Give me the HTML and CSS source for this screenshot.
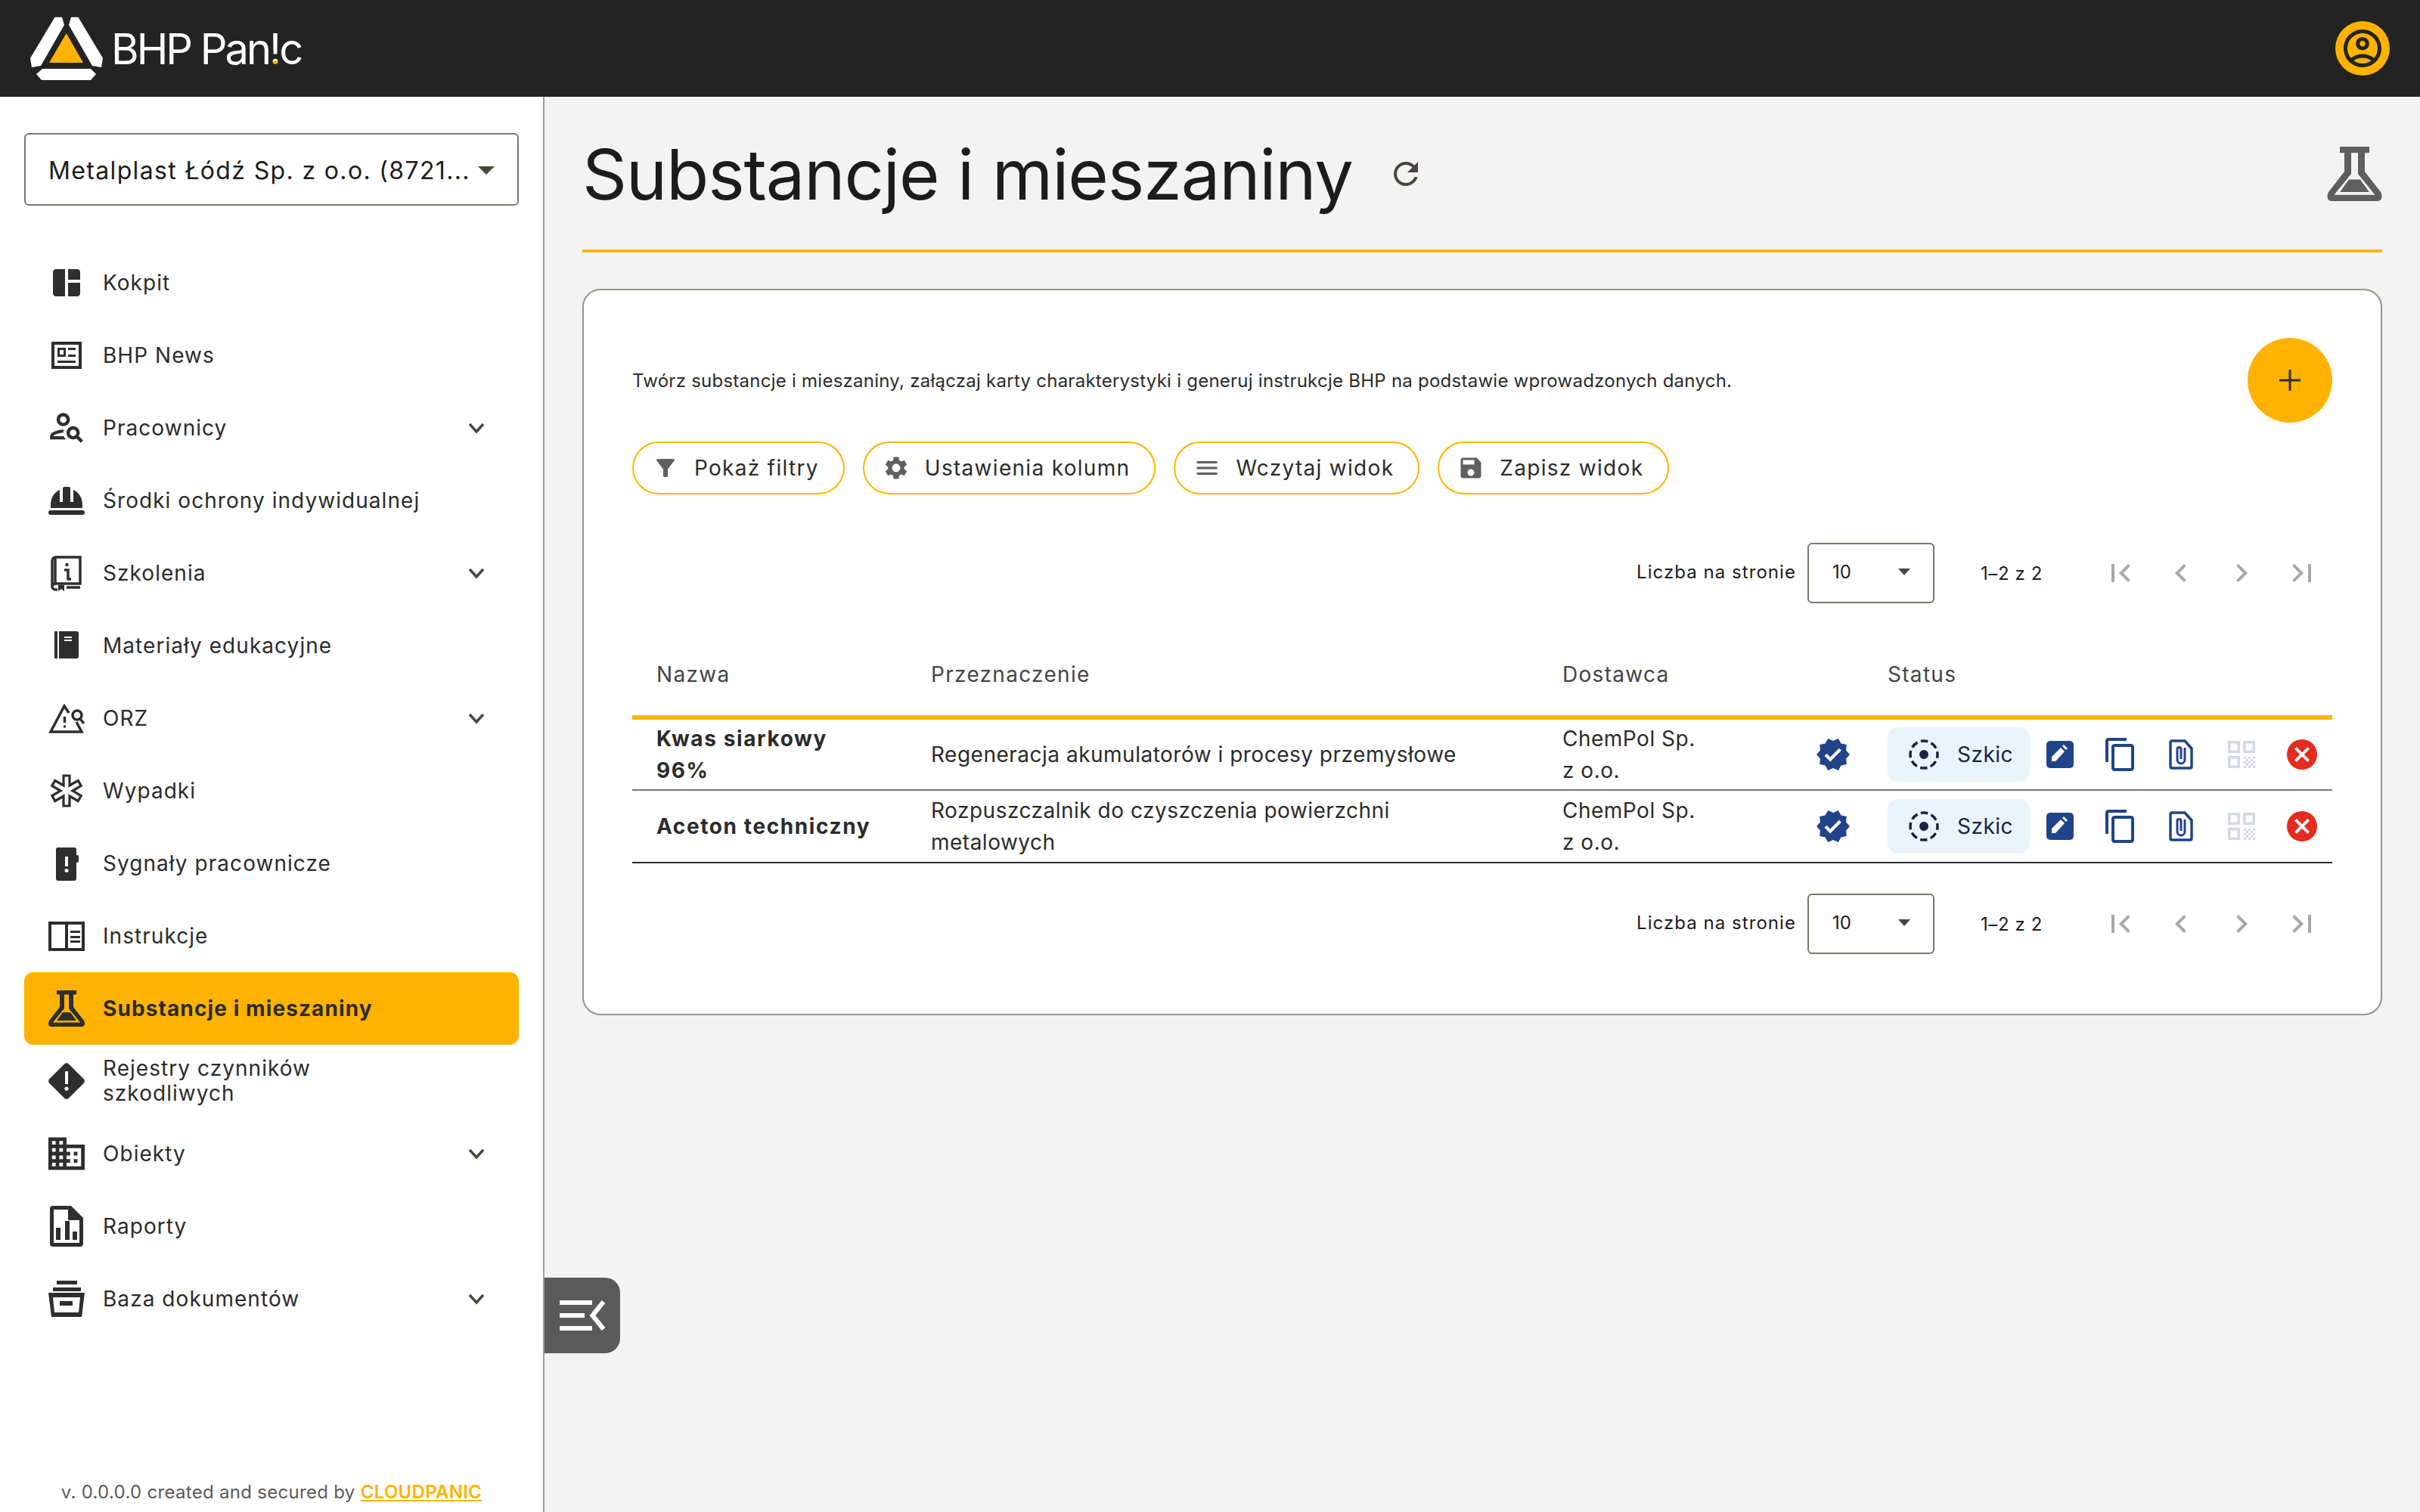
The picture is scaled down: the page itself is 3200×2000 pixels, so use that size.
FILE: index.html
```html
<!DOCTYPE html>
<html lang="pl">
<head>
  <meta charset="UTF-8">
  <title>BHP Panic - Substancje i mieszaniny</title>
  <link rel="stylesheet" href="styles.css">
</head>
<body>
  <header class="topbar">
    <div class="brand">
      <svg class="brand-mark" viewBox="40 22 96 84">
        <path fill="#fff" d="M82 22.7 72.5 22.7 40 77 42 89 54 87 85 33z"/>
        <path fill="#fff" d="M94 22.7 103.500 22.700 136 77 134 89 122 87 91 33z"/>
        <path fill="#fff" d="M56 91H120L127 98 120 106H55L48 98z"/>
        <path fill="#ffb300" d="M87.700 44 110 83H65z"/>
      </svg>
      <span class="brand-name">BHP Pan<span class="brand-bang">!</span>c</span>
    </div>
    <span class="avatar">
      <svg viewBox="0 0 24 24"><path d="M12 2C6.480 2 2 6.480 2 12s4.480 10 10 10 10-4.480 10-10S17.520 2 12 2zM7.350 18.500C8.660 17.560 10.260 17 12 17s3.340.56 4.650 1.500c-1.310.94-2.910 1.500-4.650 1.500s-3.340-.56-4.650-1.500zm10.790-1.380C16.450 15.800 14.320 15 12 15s-4.450.8-6.140 2.120C4.700 15.730 4 13.950 4 12c0-4.420 3.580-8 8-8s8 3.580 8 8c0 1.950-.7 3.730-1.860 5.120zM12 6c-1.930 0-3.500 1.570-3.500 3.500S10.070 13 12 13s3.500-1.570 3.500-3.500S13.930 6 12 6zm0 5c-.83 0-1.500-.67-1.500-1.500S11.170 8 12 8s1.500.67 1.500 1.500S12.830 11 12 11z"/></svg>
    </span>
  </header>

  <div class="layout">
    <aside class="sidebar">
      <div class="company-select">
        <span>Metalplast Łódź Sp. z o.o. (8721...</span>
        <i class="caret"></i>
      </div>

      <nav class="nav">
        <a class="nav-item">
          <svg class="nav-icon" viewBox="0 0 24 24"><path d="M11 21H5c-1.100 0-2-.9-2-2V5c0-1.100.9-2 2-2h6v18zm2 0h6c1.100 0 2-.9 2-2v-7h-8v9zm8-11V5c0-1.100-.9-2-2-2h-6v7h8z"/></svg>
          <span>Kokpit</span>
        </a>
        <a class="nav-item">
          <svg class="nav-icon" viewBox="0 0 48 48"><path fill-rule="evenodd" d="M4 6H44V42H4zM8 10V38H40V10z"/><path fill-rule="evenodd" d="M12 14H23V26H12zM15 17V23H20V17z"/><path d="M26 14H36V17H26zM26 23H36V26H26zM12 31H36V34H12z"/></svg>
          <span>BHP News</span>
        </a>
        <a class="nav-item">
          <svg class="nav-icon" viewBox="1 2 22 22"><path d="M10 12c2.210 0 4-1.790 4-4s-1.790-4-4-4-4 1.790-4 4 1.790 4 4 4zm0-6c1.100 0 2 .9 2 2s-.9 2-2 2-2-.9-2-2 .9-2 2-2zM4 18c.22-.72 3.310-2 6-2 0-.7.13-1.370.35-1.990C7.620 13.910 2 15.270 2 18v2h9.540c-.52-.58-.93-1.250-1.190-2H4zm15.300-.02c.36-.59.7-1.280.7-1.980 0-2.210-1.790-4-4-4s-4 1.790-4 4 1.790 4 4 4c.73 0 1.410-.22 2-.57L20.590 22 22 20.590c-1.500-1.500-2.200-2.200-2.700-2.610zM16 18c-1.100 0-2-.9-2-2s.9-2 2-2 2 .9 2 2-.9 2-2 2z"/></svg>
          <span>Pracownicy</span>
          <svg class="chevron" viewBox="0 0 24 24"><path d="M3 7l9 10 9-10"/></svg>
        </a>
        <a class="nav-item">
          <svg class="nav-icon" viewBox="0 0 48 48"><path d="M3 34v-4C3 20 8 13 15 10v16h4V8l1-2h8l1 2v18h4V10c7 3 12 10 12 20v4z"/><rect x="0" y="37" width="48" height="6" rx="3"/></svg>
          <span>Środki ochrony indywidualnej</span>
        </a>
        <a class="nav-item">
          <svg class="nav-icon line" viewBox="0 0 48 48"><path d="M5 42V8c0-3 2-5 5-5h32v35H10c-3 0-5 2-5 4s2 4 5 4h2M24 43h18M9 38V4"/><path d="M21 20h5v12h4"/><circle class="solid" cx="24.500" cy="13" r="2.200"/><path class="solid" d="M13 40h8v8l-4-3-4 3z"/></svg>
          <span>Szkolenia</span>
          <svg class="chevron" viewBox="0 0 24 24"><path d="M3 7l9 10 9-10"/></svg>
        </a>
        <a class="nav-item">
          <svg class="nav-icon" viewBox="0 0 48 48"><path d="M8 5H12V41H8z"/><path fill-rule="evenodd" d="M14 5H37a3 3 0 0 1 3 3V38a3 3 0 0 1-3 3H14zM21 12V14H31V12zM21 16V18H31V16z"/></svg>
          <span>Materiały edukacyjne</span>
        </a>
        <a class="nav-item">
          <svg class="nav-icon line" viewBox="0 0 48 48"><path d="M27 17 21 8 3 42H44L37 29"/><path d="M21.500 22V30"/><circle cx="38" cy="20" r="6"/><path d="M42 25 47 31"/><circle class="solid" cx="21.500" cy="35" r="1.800"/></svg>
          <span>ORZ</span>
          <svg class="chevron" viewBox="0 0 24 24"><path d="M3 7l9 10 9-10"/></svg>
        </a>
        <a class="nav-item">
          <svg class="nav-icon line thin" viewBox="0 0 24 24"><path d="M10 2h4v6.500l5.600-3.250 2 3.460L16 12l5.600 3.290-2 3.460L14 15.500V22h-4v-6.500l-5.600 3.250-2-3.460L8 12 2.400 8.710l2-3.460L10 8.500z"/></svg>
          <span>Wypadki</span>
        </a>
        <a class="nav-item">
          <svg class="nav-icon" viewBox="0 0 48 48"><path fill-rule="evenodd" d="M13 3H34a3 3 0 0 1 3 3V44a3 3 0 0 1-3 3H13a3 3 0 0 1-3-3V6a3 3 0 0 1 3-3zM22 15V28H26V15zM24 31a2.500 2.500 0 1 0 0 5 2.500 2.500 0 0 0 0-5z"/><rect x="36" y="13" width="4" height="10" rx="2"/></svg>
          <span>Sygnały pracownicze</span>
        </a>
        <a class="nav-item">
          <svg class="nav-icon" viewBox="0 0 48 48"><path fill-rule="evenodd" d="M0 5H48V44H0zM4 9V40H22V9zM26 9V40H44V9z"/><path d="M29 17H42V20H29zM29 24H42V27H29zM29 30H42V33H29z"/></svg>
          <span>Instrukcje</span>
        </a>
        <a class="nav-item active">
          <svg class="nav-icon" viewBox="0 0 48 48"><use href="#flask"/></svg>
          <span>Substancje i mieszaniny</span>
        </a>
        <a class="nav-item two-lines">
          <svg class="nav-icon" viewBox="0 0 48 48"><path fill-rule="evenodd" d="M21 1.500a4 4 0 0 1 6 0L46.500 21a4 4 0 0 1 0 6L27 46.500a4 4 0 0 1-6 0L1.500 27a4 4 0 0 1 0-6zM22 11V28H26V11zM24 31.500a2.600 2.600 0 1 0 0 5.200 2.600 2.600 0 0 0 0-5.200z"/></svg>
          <span>Rejestry czynników szkodliwych</span>
        </a>
        <a class="nav-item">
          <svg class="nav-icon" viewBox="2 3 20 18"><path d="M12 7V3H2v18h20V7H12zM6 19H4v-2h2v2zm0-4H4v-2h2v2zm0-4H4V9h2v2zm0-4H4V5h2v2zm4 12H8v-2h2v2zm0-4H8v-2h2v2zm0-4H8V9h2v2zm0-4H8V5h2v2zm10 12h-8v-2h2v-2h-2v-2h2v-2h-2V9h8v10zm-2-8h-2v2h2v-2zm0 4h-2v2h2v-2z"/></svg>
          <span>Obiekty</span>
          <svg class="chevron" viewBox="0 0 24 24"><path d="M3 7l9 10 9-10"/></svg>
        </a>
        <a class="nav-item">
          <svg class="nav-icon" viewBox="0 0 48 48"><path fill-rule="evenodd" d="M6-3H30L46 13V47a4 4 0 0 1-4 4H6a4 4 0 0 1-4-4V1a4 4 0 0 1 4-4zM7 2V46H41V16H26V2z"/><path d="M10 26H16V42H10zM22 17H28V42H22zM32 31H38V42H32z"/></svg>
          <span>Raporty</span>
        </a>
        <a class="nav-item">
          <svg class="nav-icon" viewBox="0 0 48 48"><path d="M11 0H38V5H11zM6 9H43V14H6z"/><path fill-rule="evenodd" d="M0 16H48L44 48H4zM6 22 8 42H40L42 22z"/><path d="M15 27H32V33H15z"/></svg>
          <span>Baza dokumentów</span>
          <svg class="chevron" viewBox="0 0 24 24"><path d="M3 7l9 10 9-10"/></svg>
        </a>
      </nav>

      <p class="version">v. 0.0.0.0 created and secured by <a>CLOUDPANIC</a></p>
    </aside>

    <main class="content">
      <button class="drawer-toggle">
        <svg viewBox="0 0 60 40"><path d="M0 0H43V6H0zM0 17H33V23H0zM0 34H43V40H0z"/><path d="M58 2 43.500 20 58 38" fill="none" stroke="#fff" stroke-width="6"/></svg>
      </button>

      <div class="page-head">
        <h1>Substancje i mieszaniny</h1>
        <svg class="reload" viewBox="0 0 24 24"><path d="M17.650 6.350C16.200 4.900 14.210 4 12 4c-4.420 0-7.990 3.580-7.990 8s3.570 8 7.990 8c3.730 0 6.840-2.550 7.730-6h-2.080c-.82 2.330-3.040 4-5.650 4-3.310 0-6-2.690-6-6s2.690-6 6-6c1.660 0 3.140.69 4.220 1.780L13 11h7V4l-2.350 2.350z"/></svg>
        <svg class="head-flask" viewBox="0 0 48 48">
          <defs>
            <g id="flask">
              <path fill-rule="evenodd" d="M11 0H37V5.500H33V22L47 40C49 44 48 48 44 48H4C0 48-1 44 1 40L15 22V5.500H11zM21 5.500V24L6 42.500H42L27 24V5.500z"/>
              <path d="M19 29H29L37 40H11z"/>
            </g>
          </defs>
          <use href="#flask"/>
        </svg>
      </div>

      <section class="card">
        <div class="intro">
          <p>Twórz substancje i mieszaniny, załączaj karty charakterystyki i generuj instrukcje BHP na podstawie wprowadzonych danych.</p>
          <button class="fab">
            <svg viewBox="0 0 28 28"><path d="M12.500 0H15.500V12.500H28V15.500H15.500V28H12.500V15.500H0V12.500H12.500z"/></svg>
          </button>
        </div>

        <div class="pills">
          <button class="pill">
            <svg viewBox="0 0 24 24"><path d="M4.250 5.610C6.270 8.200 10 13 10 13v6c0 .55.45 1 1 1h2c.55 0 1-.45 1-1v-6s3.720-4.800 5.740-7.390c.51-.66.04-1.610-.79-1.610H5.040c-.83 0-1.300.95-.79 1.610z"/></svg>
            Pokaż filtry
          </button>
          <button class="pill">
            <svg viewBox="0 0 24 24"><path d="M19.140 12.940c.04-.3.06-.61.06-.94 0-.32-.02-.64-.07-.94l2.030-1.580c.18-.14.23-.41.12-.61l-1.920-3.320c-.12-.22-.37-.29-.59-.22l-2.390.96c-.5-.38-1.030-.7-1.620-.94l-.36-2.540c-.04-.24-.24-.41-.48-.41h-3.840c-.24 0-.43.17-.47.41l-.36 2.540c-.59.24-1.130.57-1.620.94l-2.390-.96c-.22-.08-.47 0-.59.22L2.740 8.870c-.12.21-.08.47.12.61l2.030 1.580c-.05.3-.09.63-.09.94s.02.64.07.94l-2.030 1.580c-.18.14-.23.41-.12.61l1.920 3.320c.12.22.37.29.59.22l2.390-.96c.5.38 1.030.7 1.620.94l.36 2.540c.05.24.24.41.48.41h3.840c.24 0 .44-.17.47-.41l.36-2.540c.59-.24 1.130-.56 1.620-.94l2.390.96c.22.08.47 0 .59-.22l1.920-3.320c.12-.22.07-.47-.12-.61l-2.010-1.580zM12 15.600c-1.980 0-3.600-1.620-3.600-3.600s1.620-3.600 3.600-3.600 3.600 1.620 3.600 3.600-1.620 3.600-3.600 3.600z"/></svg>
            Ustawienia kolumn
          </button>
          <button class="pill">
            <svg viewBox="0 0 24 24"><path d="M3 18h18v-2H3v2zm0-5h18v-2H3v2zm0-7v2h18V6H3z"/></svg>
            Wczytaj widok
          </button>
          <button class="pill">
            <svg viewBox="0 0 24 24"><path d="M17 3H5c-1.110 0-2 .9-2 2v14c0 1.100.89 2 2 2h14c1.100 0 2-.9 2-2V7l-4-4zm-5 16c-1.660 0-3-1.340-3-3s1.340-3 3-3 3 1.340 3 3-1.340 3-3 3zm3-10H5V5h10v4z"/></svg>
            Zapisz widok
          </button>
        </div>

        <div class="pager">
          <span class="pager-label">Liczba na stronie</span>
          <div class="pager-select"><span>10</span><i class="caret small"></i></div>
          <span class="pager-range">1–2 z 2</span>
          <div class="pager-nav">
            <svg viewBox="0 0 24 24"><path d="M18.410 16.590 13.820 12l4.590-4.590L17 6l-6 6 6 6zM6 6h2v12H6z"/></svg>
            <svg viewBox="0 0 24 24"><path d="M15.410 7.410 14 6l-6 6 6 6 1.410-1.410L10.830 12z"/></svg>
            <svg viewBox="0 0 24 24"><path d="M10 6 8.590 7.410 13.170 12l-4.580 4.590L10 18l6-6z"/></svg>
            <svg viewBox="0 0 24 24"><path d="M5.590 7.410 10.180 12l-4.590 4.590L7 18l6-6-6-6zM16 6h2v12h-2z"/></svg>
          </div>
        </div>

        <table class="grid">
          <colgroup>
            <col class="col-name"><col class="col-use"><col class="col-supplier"><col class="col-badge"><col class="col-status">
          </colgroup>
          <thead>
            <tr><th>Nazwa</th><th>Przeznaczenie</th><th>Dostawca</th><th></th><th class="status-head">Status</th></tr>
          </thead>
          <tbody>
            <tr>
              <td class="name">Kwas siarkowy 96%</td>
              <td class="use">Regeneracja akumulatorów i procesy przemysłowe</td>
              <td class="supplier">ChemPol Sp. z o.o.</td>
              <td class="badge-cell"><svg viewBox="0 0 24 24"><use href="#verified"/></svg></td>
              <td class="actions">
                <div class="row-actions">
                  <span class="chip">
                    <svg viewBox="0 0 40 40"><use href="#draft"/></svg>
                    Szkic
                  </span>
                  <svg viewBox="0 0 48 48"><use href="#edit"/></svg>
                  <svg viewBox="0 0 24 24"><use href="#copy"/></svg>
                  <svg viewBox="0 0 48 48"><use href="#attach"/></svg>
                  <svg viewBox="0 0 48 48"><use href="#qr"/></svg>
                  <svg viewBox="0 0 24 24"><use href="#remove"/></svg>
                </div>
              </td>
            </tr>
            <tr>
              <td class="name">Aceton techniczny</td>
              <td class="use">Rozpuszczalnik do czyszczenia powierzchni metalowych</td>
              <td class="supplier">ChemPol Sp. z o.o.</td>
              <td class="badge-cell"><svg viewBox="0 0 24 24"><use href="#verified"/></svg></td>
              <td class="actions">
                <div class="row-actions">
                  <span class="chip">
                    <svg viewBox="0 0 40 40"><use href="#draft"/></svg>
                    Szkic
                  </span>
                  <svg viewBox="0 0 48 48"><use href="#edit"/></svg>
                  <svg viewBox="0 0 24 24"><use href="#copy"/></svg>
                  <svg viewBox="0 0 48 48"><use href="#attach"/></svg>
                  <svg viewBox="0 0 48 48"><use href="#qr"/></svg>
                  <svg viewBox="0 0 24 24"><use href="#remove"/></svg>
                </div>
              </td>
            </tr>
          </tbody>
        </table>

        <div class="pager pager-bottom">
          <span class="pager-label">Liczba na stronie</span>
          <div class="pager-select"><span>10</span><i class="caret small"></i></div>
          <span class="pager-range">1–2 z 2</span>
          <div class="pager-nav">
            <svg viewBox="0 0 24 24"><path d="M18.410 16.590 13.820 12l4.590-4.590L17 6l-6 6 6 6zM6 6h2v12H6z"/></svg>
            <svg viewBox="0 0 24 24"><path d="M15.410 7.410 14 6l-6 6 6 6 1.410-1.410L10.830 12z"/></svg>
            <svg viewBox="0 0 24 24"><path d="M10 6 8.590 7.410 13.170 12l-4.580 4.590L10 18l6-6z"/></svg>
            <svg viewBox="0 0 24 24"><path d="M5.590 7.410 10.180 12l-4.590 4.590L7 18l6-6-6-6zM16 6h2v12h-2z"/></svg>
          </div>
        </div>
      </section>
    </main>
  </div>

  <svg class="icon-defs" width="0" height="0">
    <defs>
      <pattern id="qr-dots" width="6" height="6" patternUnits="userSpaceOnUse">
        <rect width="3" height="3" fill="#d0d9e8"/>
        <rect x="3" y="3" width="3" height="3" fill="#d0d9e8"/>
      </pattern>
      <path id="verified" fill="#21438a" d="M23 12l-2.440-2.790.34-3.690-3.610-.82-1.890-3.200L12 2.960 8.600 1.500 6.710 4.690 3.100 5.500l.34 3.700L1 12l2.440 2.790-.34 3.700 3.610.82L8.600 22.500l3.400-1.470 3.400 1.460 1.890-3.190 3.610-.82-.34-3.690L23 12zm-12.910 4.720l-3.800-3.810 1.480-1.480 2.320 2.330 5.850-5.870 1.480 1.480-7.330 7.350z"/>
      <g id="draft">
        <circle cx="20" cy="20" r="18" fill="none" stroke="#1a2440" stroke-width="3.500" stroke-dasharray="9.500 4.640" stroke-dashoffset="4.700"/>
        <circle cx="20" cy="20" r="6" fill="#1a2440"/>
      </g>
      <g id="edit">
        <rect x="6" y="6" width="36" height="36" rx="5" fill="#21438a"/>
        <path fill="#fff" d="M13 33V27L25 15 30 20 18 33z"/>
        <path fill="#fff" d="M27 13 29 11 34 16 32 18z"/>
      </g>
      <path id="copy" fill="#21438a" d="M16 1H4c-1.100 0-2 .9-2 2v14h2V3h12V1zm3 4H8c-1.100 0-2 .9-2 2v14c0 1.100.9 2 2 2h11c1.100 0 2-.9 2-2V7c0-1.100-.9-2-2-2zm0 16H8V7h11v14z"/>
      <g id="attach" fill="none" stroke="#21438a">
        <path stroke-width="3.500" d="M11 6H29L38 16V40A2 2 0 0 1 36 42H12A2 2 0 0 1 10 40V8A2 2 0 0 1 12 6z"/>
        <path stroke-width="3" d="M29 15V31A5 5 0 0 1 19 31V17A2.500 2.500 0 0 1 24 17V30"/>
      </g>
      <g id="qr">
        <g fill="none" stroke="#d0d9e8" stroke-width="3.500">
          <rect x="7.750" y="7.750" width="12.500" height="12.500"/>
          <rect x="27.750" y="7.750" width="12.500" height="12.500"/>
          <rect x="7.750" y="27.750" width="12.500" height="12.500"/>
        </g>
        <rect x="27" y="27" width="15" height="15" fill="url(#qr-dots)"/>
      </g>
      <g id="remove">
        <circle cx="12" cy="12" r="10" fill="#e52b1f"/>
        <path fill="#fff" d="M17 15.590 15.590 17 12 13.410 8.410 17 7 15.590 10.590 12 7 8.410 8.410 7 12 10.590 15.590 7 17 8.410 13.410 12z"/>
      </g>
    </defs>
  </svg>
</body>
</html>
```

FILE: styles.css
```css
* {
  box-sizing: border-box;
}

html, body {
  height: 100%;
}

body {
  margin: 0;
  display: flex;
  flex-direction: column;
  overflow: hidden;
  font-family: Inter, "Noto Sans", sans-serif;
  font-size: 28px;
  color: #2b2b2b;
  background: #f3f3f3;
}

/* top bar */
.topbar {
  flex: 0 0 128px;
  display: flex;
  align-items: center;
  justify-content: space-between;
  padding: 0 40px;
  background: #232323;
}

.brand {
  display: flex;
  align-items: center;
  gap: 11px;
}

.brand-mark {
  width: 96px;
  height: 84px;
}

.brand-name {
  padding-top: 2px;
  font-size: 56px;
  font-weight: 400;
  letter-spacing: -3px;
  color: #fff;
}

.brand-bang {
  background: linear-gradient(#fff 72%, #ffb300 72%);
  -webkit-background-clip: text;
  background-clip: text;
  color: transparent;
}

.avatar {
  width: 72px;
  height: 72px;
  display: flex;
  align-items: center;
  justify-content: center;
  border-radius: 50%;
  background: #ffb300;
}

.avatar svg {
  width: 60px;
  height: 60px;
  fill: #232323;
}

.layout {
  flex: 1;
  display: flex;
  min-height: 0;
}

/* sidebar */
.sidebar {
  flex: 0 0 720px;
  display: flex;
  flex-direction: column;
  padding: 48px 32px 0;
  border-right: 2px solid #9a9a9a;
  background: #fff;
}

.company-select {
  height: 96px;
  display: flex;
  align-items: center;
  justify-content: space-between;
  padding: 2px 30px 0 30px;
  border: 2px solid #7b766b;
  border-radius: 6px;
  font-size: 32px;
  letter-spacing: 1.35px;
  color: #1c1c1c;
  white-space: nowrap;
}

.caret {
  width: 0;
  height: 0;
  border-left: 11px solid transparent;
  border-right: 11px solid transparent;
  border-top: 11px solid #4a453d;
}

.caret.small {
  border-left-width: 8px;
  border-right-width: 8px;
  border-top-width: 9px;
}

.nav {
  margin-top: 54px;
  display: flex;
  flex-direction: column;
}

.nav-item {
  height: 96px;
  display: flex;
  align-items: center;
  gap: 24px;
  padding: 0 32px;
  border-radius: 12px;
  letter-spacing: 1.05px;
  line-height: 1;
}

.nav-item.active {
  background: #ffb300;
  font-weight: 700;
  letter-spacing: 1.1px;
}

.nav-item.two-lines span {
  line-height: 33px;
  width: 340px;
}

.nav-icon {
  flex: 0 0 48px;
  width: 48px;
  height: 48px;
  fill: #2e2e2e;
  overflow: visible;
}

.nav-icon.line {
  fill: none;
  stroke: #2e2e2e;
  stroke-width: 3.5;
}

.nav-icon.thin {
  stroke-width: 1.6;
}

.nav-icon .solid {
  fill: #2e2e2e;
  stroke: none;
}

.chevron {
  width: 24px;
  height: 24px;
  margin-left: auto;
  margin-right: 12px;
  fill: none;
  stroke: #4a453d;
  stroke-width: 3.5;
}

.version {
  margin: auto -32px 12px;
  text-align: center;
  font-size: 24px;
  letter-spacing: 0.3px;
  color: #5a5a5a;
}

.version a {
  font-weight: 600;
  color: #ffb300;
  text-decoration: underline;
}

/* main column */
.content {
  position: relative;
  flex: 1;
  padding: 0 50px;
}

.drawer-toggle {
  position: absolute;
  left: 0;
  top: 1562px;
  width: 100px;
  height: 100px;
  display: flex;
  align-items: center;
  justify-content: center;
  padding: 0;
  border: 0;
  border-radius: 0 20px 20px 0;
  background: #5a5a5a;
}

.drawer-toggle svg {
  width: 60px;
  height: 40px;
  fill: #fff;
}

.page-head {
  height: 206px;
  display: flex;
  align-items: center;
  padding-top: 2px;
  border-bottom: 4px solid #ffb300;
}

.page-head h1 {
  margin: 0;
  font-size: 92px;
  font-weight: 400;
  letter-spacing: -1.2px;
  color: #1c1c1c;
}

.reload {
  width: 48px;
  height: 48px;
  margin-left: 46px;
  fill: #4a453d;
}

.head-flask {
  width: 73px;
  height: 72px;
  margin-left: auto;
  fill: #5e5e5e;
}

.card {
  margin-top: 48px;
  padding: 63px 64px 79px;
  border: 2px solid #999386;
  border-radius: 24px;
  background: #fff;
}

.intro {
  display: flex;
  align-items: center;
  justify-content: space-between;
  height: 112px;
}

.intro p {
  margin: 0;
  font-size: 24px;
  letter-spacing: 0.25px;
  color: #2b2b2b;
}

.fab {
  width: 112px;
  height: 112px;
  display: flex;
  align-items: center;
  justify-content: center;
  border: 0;
  border-radius: 50%;
  background: #ffb300;
}

.fab svg {
  width: 28px;
  height: 28px;
  fill: #2e2e2e;
}

.pills {
  display: flex;
  gap: 24px;
  margin-top: 25px;
}

.pill {
  height: 70px;
  display: flex;
  align-items: center;
  gap: 20px;
  padding: 0 32px 0 24px;
  border: 2px solid #ffb300;
  border-radius: 35px;
  background: #fff;
  font-family: inherit;
  font-size: 28px;
  letter-spacing: 1.3px;
  color: #2b2b2b;
}

.pill svg {
  width: 36px;
  height: 36px;
  fill: #5f5f5f;
}

/* pagination */
.pager {
  display: flex;
  align-items: center;
  justify-content: flex-end;
  margin-top: 64px;
  padding-right: 16px;
  font-size: 24px;
  color: #1c1c1c;
}

.pager-bottom {
  margin-top: 40px;
}

.pager-label {
  margin-right: 15px;
  padding-bottom: 3px;
  letter-spacing: 1.05px;
}

.pager-select {
  width: 168px;
  height: 80px;
  display: flex;
  align-items: center;
  justify-content: space-between;
  padding: 0 30px 4px 31px;
  border: 2px solid #7b766b;
  border-radius: 6px;
}

.pager-range {
  margin-left: 61px;
  margin-right: 79px;
  letter-spacing: 0.6px;
}

.pager-nav {
  display: flex;
  gap: 32px;
}

.pager-nav svg {
  width: 48px;
  height: 48px;
  fill: #a8a8a8;
}

/* table */
.grid {
  width: 100%;
  margin-top: 40px;
  table-layout: fixed;
  border-collapse: separate;
  border-spacing: 0;
}

.col-name { width: 363px; }
.col-use { width: 835px; }
.col-supplier { width: 336px; }
.col-badge { width: 126px; }
.col-status { width: 588px; }

.grid th {
  height: 114px;
  padding: 0 32px;
  border-bottom: 6px solid #ffb300;
  text-align: left;
  font-weight: 400;
  letter-spacing: 1.3px;
  color: #444;
}

.grid th.status-head {
  padding-left: 0;
}

.grid td {
  height: 94px;
  padding: 0 32px;
  border-bottom: 2px solid #7b766b;
  line-height: 42px;
  letter-spacing: 0.5px;
}

.grid tbody tr:last-child td {
  height: 96px;
  border-bottom-color: #2b2b2b;
}

.grid td.name {
  padding-right: 36px;
  font-weight: 700;
  letter-spacing: 1.6px;
}

.grid td.use {
  padding-right: 64px;
}

.grid td.supplier {
  padding-right: 119px;
}

.grid td.badge-cell {
  padding: 0 18px 0 0;
  text-align: center;
}

.badge-cell svg {
  display: block;
  margin: 0 auto;
  width: 48px;
  height: 48px;
}

.grid td.actions {
  padding: 0;
}

.row-actions {
  display: flex;
  align-items: center;
  gap: 32px;
}

.row-actions > svg {
  flex: 0 0 48px;
  width: 48px;
  height: 48px;
}

.chip {
  flex: 0 0 188px;
  height: 72px;
  display: flex;
  align-items: center;
  gap: 24px;
  margin-right: -16px;
  padding-left: 28px;
  border-radius: 14px;
  background: #e8f3fa;
  color: #1a2440;
}

.chip svg {
  width: 40px;
  height: 40px;
}

.icon-defs {
  position: absolute;
}
```
